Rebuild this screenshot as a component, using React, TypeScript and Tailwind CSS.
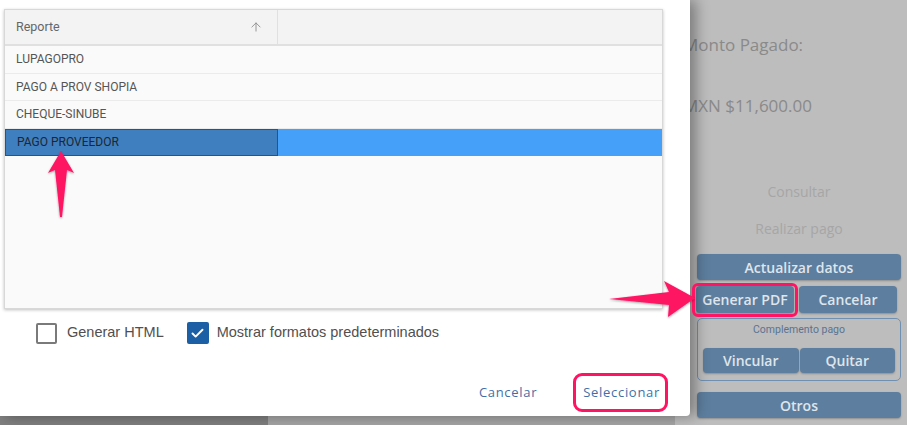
import React from 'react';
import { ArrowUp, Check } from 'lucide-react';

const rows = ['LUPAGOPRO', 'PAGO A PROV SHOPIA', 'CHEQUE-SINUBE', 'PAGO PROVEEDOR'];

const panelFont = { fontFamily: '"Open Sans", "Noto Sans", sans-serif' };

function PanelButton({ children, className = '' }: { children: React.ReactNode; className?: string }) {
  return (
    <div
      className={
        'flex items-center justify-center rounded-[4px] bg-[#5d7e9e] text-[14px] font-semibold text-[#dfe5ec] shadow-[0_1px_2px_rgba(0,0,0,0.25)] ' +
        className
      }
    >
      {children}
    </div>
  );
}

export default function App() {
  return (
    <div className="relative w-[907px] h-[425px] overflow-hidden bg-[#bdbdbd]" style={panelFont}>
      {/* Page behind the modal (already dimmed) */}
      <div className="flex h-full">
        <div className="w-[675px] flex flex-col justify-end">
          <div className="flex h-[9px]">
            <div className="w-[268px] bg-[#7f7f7f]" />
            <div className="flex-1 bg-[#a4a4a4]" />
          </div>
        </div>

        {/* Right panel */}
        <div className="flex-1 flex flex-col pt-[33px] pl-[8px]">
          <div className="text-[17px] text-[#8a8a8a] leading-[24px]">Monto Pagado:</div>
          <div className="mt-[37px] text-[17px] text-[#8a8a8a] leading-[24px]">MXN $11,600.00</div>

          <div className="ml-[14px] mr-[6px] mt-[64px] flex flex-col">
            <div className="text-center text-[14px] text-[#a6a6a6] leading-[20px]">Consultar</div>
            <div className="mt-[17px] text-center text-[14px] text-[#a6a6a6] leading-[20px]">Realizar pago</div>

            <PanelButton className="mt-[15px] h-[26px]">Actualizar datos</PanelButton>
            <div className="mt-[6px] flex gap-[5px] pr-[4px]">
              <PanelButton className="h-[27px] w-[98px] ml-[-1px]">Generar PDF</PanelButton>
              <PanelButton className="h-[27px] flex-1">Cancelar</PanelButton>
            </div>

            <div className="mt-[5px] h-[63px] rounded-[5px] border border-[#7090b2] px-[5px] pt-[4px]">
              <div className="text-center text-[10.5px] leading-[14px] text-[#5b7391]" style={{ fontFamily: 'Roboto, sans-serif' }}>
                Complemento pago
              </div>
              <div className="mt-[11px] flex gap-[1px]">
                <PanelButton className="h-[25px] flex-1">Vincular</PanelButton>
                <PanelButton className="h-[25px] flex-1">Quitar</PanelButton>
              </div>
            </div>

            <PanelButton className="mt-[11px] h-[26px]">Otros</PanelButton>
          </div>
        </div>
      </div>

      {/* Modal */}
      <div className="absolute left-0 top-0 w-[690px] h-[416px] bg-white rounded-br-[4px] shadow-[6px_0_14px_rgba(0,0,0,0.35)] flex flex-col">
        <div className="ml-[4px] mt-[9px] w-[659px] h-[300px] bg-[#fafafa] border border-[#d8d8d8] shadow-[0_1px_3px_rgba(0,0,0,0.25)] flex flex-col" style={{ fontFamily: 'Roboto, sans-serif' }}>
          <div className="flex h-[36px] bg-[#f3f3f3] border-b-2 border-[#e0e0e0]">
            <div className="w-[273px] flex items-center justify-between pl-[11px] pr-[14px] border-r border-[#e0e0e0]">
              <span className="text-[12.5px] text-[#666]">Reporte</span>
              <ArrowUp className="w-[14px] h-[14px] text-[#8a8a8a]" strokeWidth={1.5} />
            </div>
            <div className="flex-1" />
          </div>
          {rows.map((r, i) => {
            const sel = i === rows.length - 1;
            return (
              <div key={r} className={'flex h-[27.5px] ' + (sel ? 'bg-[#45a0fa]' : 'border-b border-[#ebebeb]')}>
                <div
                  className={
                    'w-[273px] flex items-center pl-[11px] text-[12px] ' +
                    (sel ? 'bg-[#3f7fbf] border border-[#1f5590] text-[#1c2633]' : 'text-[#555]')
                  }
                >
                  {r}
                </div>
                <div className="flex-1" />
              </div>
            );
          })}
        </div>

        <div className="flex items-center mt-[13px] ml-[36px] h-[22px] text-[14.5px] text-[#505050]" style={{ fontFamily: '"Liberation Sans", Arial, sans-serif' }}>
          <div className="w-[21px] h-[21px] rounded-[2px] border-2 border-[#7a7a7a]" />
          <span className="ml-[10px]">Generar HTML</span>
          <div className="ml-[23px] w-[22px] h-[22px] rounded-[2px] bg-[#1d5fa5] flex items-center justify-center">
            <Check className="w-[15px] h-[15px] text-white" strokeWidth={3} />
          </div>
          <span className="ml-[8px]">Mostrar formatos predeterminados</span>
        </div>

        <div className="mt-auto mb-[14px] flex justify-end items-center gap-[46px] pr-[30px] text-[13px] text-[#3f6fa8] tracking-[0.7px]">
          <span>Cancelar</span>
          <span>Seleccionar</span>
        </div>
      </div>

      {/* Annotations */}
      <div className="absolute left-[573px] top-[373px] w-[95px] h-[39px] rounded-[9px] border-[3px] border-[#ff1464]" />
      <div className="absolute left-[692px] top-[283px] w-[106px] h-[34px] rounded-[6px] border-[3px] border-[#ff1464]" />

      <svg className="absolute left-0 top-0" width="907" height="425" viewBox="0 0 907 425">
        <defs>
          <filter id="sh" x="-20%" y="-20%" width="140%" height="140%">
            <feDropShadow dx="0" dy="1" stdDeviation="1.2" floodColor="#000" floodOpacity="0.35" />
          </filter>
        </defs>
        <polygon
          points="61,151 74,173 67,170 62,217 60,217 55,170 48,173"
          fill="#ff1464"
          filter="url(#sh)"
        />
        <polygon
          points="609,299 669,292 664,281 695,298 668,317 669,305"
          fill="#ff1464"
          filter="url(#sh)"
        />
      </svg>
    </div>
  );
}
